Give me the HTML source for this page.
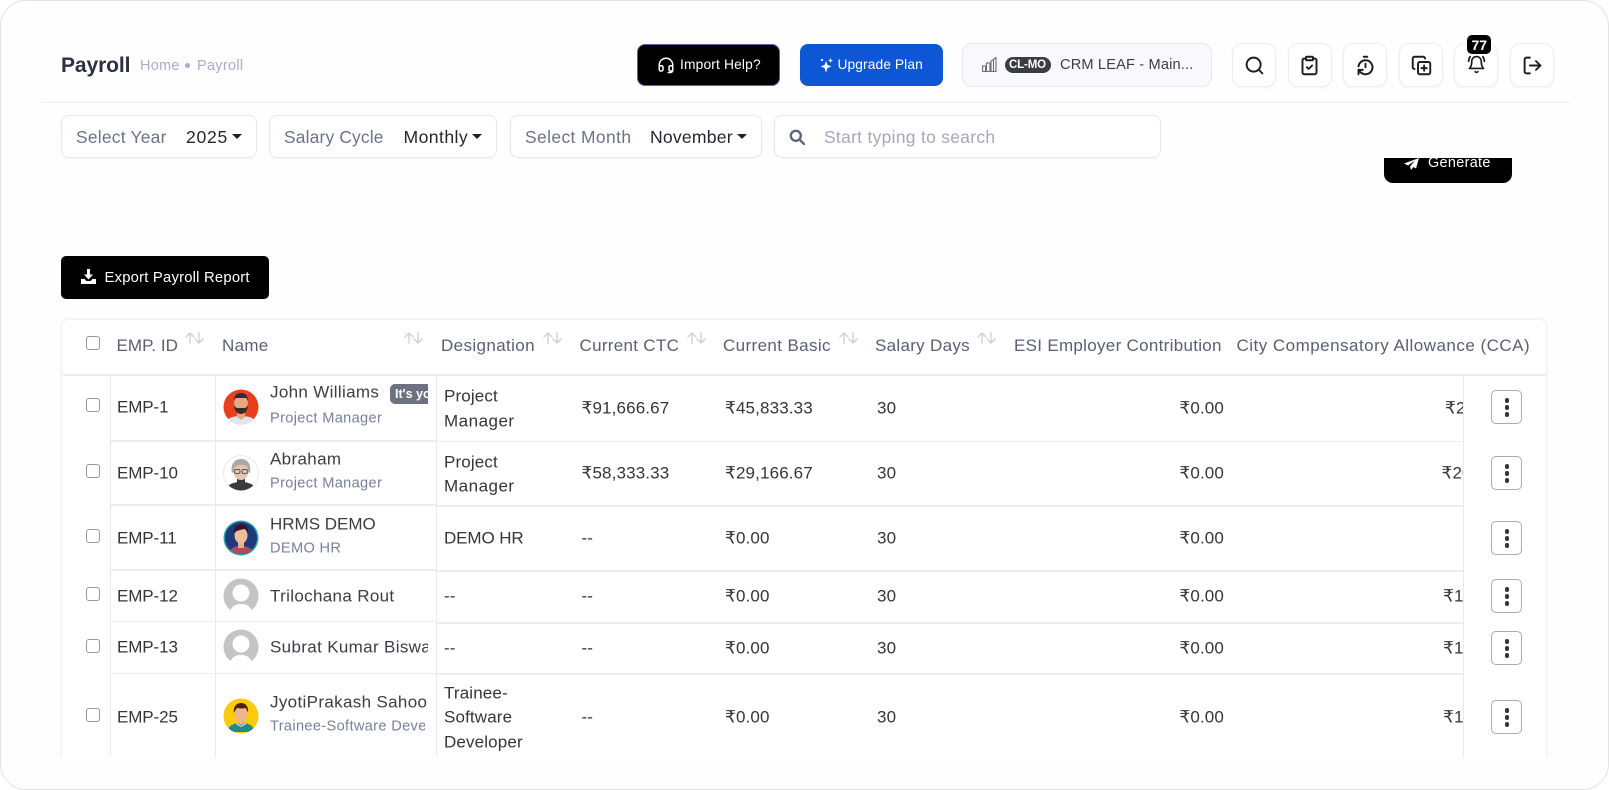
<!DOCTYPE html>
<html><head><meta charset="utf-8"><title>Payroll</title>
<style>
html,body{margin:0;padding:0;width:1609px;height:790px;overflow:hidden;background:#fff}
body{font-family:"Liberation Sans",sans-serif;position:relative}
#page{position:absolute;left:0;top:0;width:1609px;height:790px;box-sizing:border-box;border:1.5px solid #e3e3e3;border-radius:26px;background:#fefefe}
#root{position:absolute;left:0;top:0;width:1609px;height:790px}
.t{position:absolute;white-space:nowrap;line-height:0}
.b{position:absolute;box-sizing:border-box}
.ib{position:absolute;top:43px;width:44px;height:44px;box-sizing:border-box;border:1px solid #ecedf3;border-radius:10px;background:#fff;box-shadow:0 1px 2px rgba(40,40,80,.05)}
.ib svg{position:absolute;left:10.5px;top:10.5px;width:21px;height:21px;fill:none;stroke:#1d1d20;stroke-width:2.2;stroke-linecap:round;stroke-linejoin:round}
.f{position:absolute;top:115px;height:43px;box-sizing:border-box;border:1px solid #e6e7f0;border-radius:8px;background:#fff;box-shadow:0 1px 2px rgba(40,40,80,.04)}
.fl{font-size:17.4px;color:#6b7389;letter-spacing:.24px;top:136.5px}
.fv{font-size:17.6px;color:#25272e;top:136.5px}
.car{position:absolute;width:0;height:0;border-left:5px solid transparent;border-right:5px solid transparent;border-top:5.5px solid #222;top:134px}
.h{font-size:17px;color:#5a6072;letter-spacing:.3px;top:346px}
.c{font-size:17px;color:#33353c;letter-spacing:.14px;transform:translateY(.6px)}
.id{letter-spacing:-.1px}
.n{font-size:17px;color:#3c3e46;letter-spacing:.34px;transform:translateY(.6px)}
.s{font-size:14.6px;color:#78809b;letter-spacing:.34px;transform:translateY(.6px)}
.hl{position:absolute;height:1.5px;background:#ecedf4}
.vl{position:absolute;width:1px;background:#e8e9f1}
.cb{position:absolute;left:86px;width:14px;height:14px;box-sizing:border-box;border:1.5px solid #98989d;border-radius:3px;background:#fff}
.act{position:absolute;left:1491px;width:31px;height:34px;box-sizing:border-box;border:1px solid #a6abbd;border-radius:5px;background:#fff}
.act i{position:absolute;left:12.5px;width:4.5px;height:4.5px;border-radius:50%;background:#33353c}
.sort{position:absolute;top:332px;width:19px;height:12px;fill:none;stroke:#cfd0d8;stroke-width:1.4;stroke-linecap:round;stroke-linejoin:round}
.av{position:absolute;left:223px;width:36px;height:36px}
.clip{position:absolute;overflow:hidden}
</style></head><body>
<div id="page"></div>
<div id="root">

<!-- header -->
<div class="t" style="left:61px;top:65.5px;font-size:21px;font-weight:700;color:#2b3140;letter-spacing:-.1px">Payroll</div>
<div class="t" style="left:140px;top:65.5px;font-size:14.4px;color:#a8adc6;letter-spacing:.35px">Home</div>
<div class="b" style="left:185px;top:63px;width:5px;height:5px;border-radius:50%;background:#a8adc6"></div>
<div class="t" style="left:197px;top:65.5px;font-size:14.4px;color:#a8adc6;letter-spacing:.35px">Payroll</div>
<div class="b" style="left:41px;top:102px;width:1529px;height:1px;background:#eeeef5"></div>

<div class="b" style="left:637px;top:44px;width:143px;height:42px;background:#000;border:1px solid #5b5fb0;border-radius:8px"></div>
<svg style="position:absolute;left:657px;top:56px;width:18px;height:18px;fill:none;stroke:#fff;stroke-width:2;stroke-linecap:round;stroke-linejoin:round" viewBox="0 0 24 24"><path d="M3 14v-2a9 9 0 0 1 18 0v2"/><path d="M3 15a2 2 0 0 1 2-2h1a2 2 0 0 1 2 2v3a2 2 0 0 1-2 2H5a2 2 0 0 1-2-2z"/><path d="M21 15a2 2 0 0 0-2-2h-1a2 2 0 0 0-2 2v3a2 2 0 0 0 2 2h1a2 2 0 0 0 2-2z"/><path d="M21 18v1a3 3 0 0 1-3 3h-3"/></svg>
<div class="t" style="left:680px;top:65px;font-size:13.8px;color:#fff;letter-spacing:.15px">Import Help?</div>

<div class="b" style="left:800px;top:44px;width:143px;height:42px;background:#0d57d6;border-radius:8px"></div>
<svg style="position:absolute;left:820px;top:58px;width:13px;height:15px;fill:#fff" viewBox="0 0 13 15"><path d="M6 3l1.5 4L11.5 8.5 7.500 10 6 14.500 4.500 10 .5 8.500 4.500 7z"/><path d="M10.500 0l.7 1.800 1.800.7-1.800.7-.7 1.800-.7-1.800-1.800-.7 1.800-.7z"/><circle cx="2" cy="2" r="1.100"/></svg>
<div class="t" style="left:837.5px;top:65px;font-size:13.8px;color:#fff;letter-spacing:.08px">Upgrade Plan</div>

<div class="b" style="left:962px;top:43px;width:250px;height:44px;background:#f8f8fd;border:1px solid #e5e6f1;border-radius:10px"></div>
<svg style="position:absolute;left:982px;top:57px;width:15px;height:15px;fill:none;stroke:#6d7078;stroke-width:1.100" viewBox="0 0 15 15"><rect x=".6" y="9" width="3" height="5.500"/><rect x="4.500" y="6" width="3.500" height="8.500"/><path d="M9 14.500V4l5-3.500v14z"/><path d="M11.500 3v11"/></svg>
<div class="b" style="left:1005px;top:57px;width:46px;height:16px;background:#3a3d42;border-radius:8px"></div>
<div class="t" style="left:1009px;top:65px;font-size:11.5px;font-weight:700;color:#fff;letter-spacing:-.15px">CL-MO</div>
<div class="t" style="left:1060px;top:65px;font-size:14.6px;color:#3c3e46;letter-spacing:.16px">CRM LEAF - Main...</div>

<div class="ib" style="left:1232px"><svg viewBox="0 0 24 24"><circle cx="11" cy="11" r="8"/><path d="M21 21l-4.300-4.300"/></svg></div>
<div class="ib" style="left:1288px"><svg style="left:10px" viewBox="0 0 24 24"><rect x="8" y="2" width="8" height="4" rx="1"/><path d="M16 4h2a2 2 0 0 1 2 2v14a2 2 0 0 1-2 2H6a2 2 0 0 1-2-2V6a2 2 0 0 1 2-2h2"/><path d="M9 14l2 2 4-4"/></svg></div>
<div class="ib" style="left:1343px"><svg viewBox="0 0 24 24"><path d="M10 2h4"/><path d="M12 14v-4"/><path d="M4 13a8 8 0 0 1 8-7 8 8 0 1 1-5.300 14L4 17.600"/><path d="M9 17H4v5"/></svg></div>
<div class="ib" style="left:1399px"><svg viewBox="0 0 24 24"><path d="M15 12v6M12 15h6"/><rect x="8" y="8" width="14" height="14" rx="2"/><path d="M4 16c-1.100 0-2-.9-2-2V4c0-1.100.9-2 2-2h10c1.100 0 2 .9 2 2"/></svg></div>
<div class="ib" style="left:1454px"><svg style="left:12px;top:11px;width:19px;height:19px;stroke-width:2.1" viewBox="0 0 24 24"><path d="M6 8a6 6 0 0 1 12 0c0 7 3 9 3 9H3s3-2 3-9"/><path d="M10.300 21a1.940 1.940 0 0 0 3.400 0"/><path d="M4 2C2.800 3.700 2 5.700 2 8"/><path d="M22 8c0-2.300-.8-4.300-2-6"/></svg></div>
<div class="b" style="left:1467px;top:35px;width:24px;height:19px;background:#000;border-radius:5px"></div>
<div class="t" style="left:1471.5px;top:44.5px;font-size:14px;font-weight:700;color:#fff">77</div>
<div class="ib" style="left:1510px"><svg viewBox="0 0 24 24"><path d="M9 21H5a2 2 0 0 1-2-2V5a2 2 0 0 1 2-2h4"/><path d="M16 17l5-5-5-5"/><path d="M21 12H9"/></svg></div>

<!-- generate (behind) -->
<div class="b" style="left:1384px;top:158px;width:128px;height:25px;background:#000;border-radius:0 0 9px 9px"></div>
<svg style="position:absolute;left:1404px;top:157px;width:15px;height:13px;fill:#fff" viewBox="0 0 15 13"><path d="M15 1L0 6.500l4 2 7-5-5 6 1 3.500 2.500-3 2.500 1.500z"/></svg>
<div class="t" style="left:1428px;top:163px;font-size:14.4px;color:#fff;letter-spacing:.34px">Generate</div>

<!-- filters -->
<div class="f" style="left:61px;width:196px"></div>
<div class="t fl" style="left:76px">Select Year</div>
<div class="t fv" style="left:186px;letter-spacing:.7px">2025</div>
<div class="car" style="left:231.5px"></div>
<div class="f" style="left:269px;width:228px"></div>
<div class="t fl" style="left:284px;letter-spacing:.17px">Salary Cycle</div>
<div class="t fv" style="left:403.5px;letter-spacing:.43px">Monthly</div>
<div class="car" style="left:472px"></div>
<div class="f" style="left:510px;width:252px"></div>
<div class="t fl" style="left:525px;letter-spacing:.41px">Select Month</div>
<div class="t fv" style="left:650px;letter-spacing:.2px">November</div>
<div class="car" style="left:737px"></div>
<div class="f" style="left:774px;width:387px"></div>
<svg style="position:absolute;left:789px;top:129px;width:16px;height:16px;fill:none;stroke:#5f6678;stroke-width:2.4;stroke-linecap:round" viewBox="0 0 16 16"><circle cx="6.800" cy="6.800" r="5"/><path d="M10.700 10.700L15 15"/></svg>
<div class="t" style="left:824px;top:136.5px;font-size:17.4px;color:#a5a8b8;letter-spacing:.32px">Start typing to search</div>

<!-- export -->
<div class="b" style="left:61px;top:256px;width:208px;height:43px;background:#000;border-radius:5px"></div>
<svg style="position:absolute;left:81px;top:269px;width:15px;height:15px;fill:#fff" viewBox="0 0 15 15"><path d="M6 0h3v5.500h3L7.500 10.500 3 5.500h3z"/><path d="M0 10h3.500l2 2h4l2-2H15v5H0z"/></svg>
<div class="t" style="left:104.5px;top:278px;font-size:14.8px;color:#fff;letter-spacing:.22px">Export Payroll Report</div>

<!-- table -->
<div class="clip" style="left:50px;top:305px;width:1510px;height:452px">
 <div class="b" style="left:11px;top:14px;width:1486px;height:500px;background:#fff;border:1.5px solid #f0f1f8;border-radius:8px 8px 0 0;box-shadow:0 0 5px rgba(60,60,120,.05)"></div>
</div>

<div class="clip" style="left:0;top:0;width:1609px;height:757px">
 <div class="hl" style="left:63px;width:1483px;top:373.5px;height:2px"></div>
 <div class="hl" style="left:110px;width:326px;top:440px"></div>
 <div class="hl" style="left:110px;width:326px;top:504px"></div>
 <div class="hl" style="left:110px;width:326px;top:569px"></div>
 <div class="hl" style="left:110px;width:326px;top:620.5px"></div>
 <div class="hl" style="left:110px;width:326px;top:672.5px"></div>
 <div class="hl" style="left:436px;width:1027px;top:440.5px"></div>
 <div class="hl" style="left:436px;width:1027px;top:505px"></div>
 <div class="hl" style="left:436px;width:1027px;top:570px"></div>
 <div class="hl" style="left:436px;width:1027px;top:622px"></div>
 <div class="hl" style="left:436px;width:1027px;top:673px"></div>
 <div class="vl" style="left:109.5px;top:375px;height:390px"></div>
 <div class="vl" style="left:215px;top:375px;height:390px"></div>
 <div class="vl" style="left:435.5px;top:375px;height:390px;width:1.5px"></div>
 <div class="vl" style="left:1463px;top:375px;height:390px"></div>

 <!-- header row -->
 <div class="cb" style="top:336px"></div>
 <div class="t h" style="left:116.5px;letter-spacing:.05px">EMP. ID</div>
 <div class="t h" style="left:222px">Name</div>
 <div class="t h" style="left:441px;letter-spacing:.38px">Designation</div>
 <div class="t h" style="left:579.5px">Current CTC</div>
 <div class="t h" style="left:723px;letter-spacing:.38px">Current Basic</div>
 <div class="t h" style="left:875px">Salary Days</div>
 <div class="t h" style="left:1014px">ESI Employer Contribution</div>
 <div class="t h" style="left:1236.5px;letter-spacing:.48px">City Compensatory Allowance (CCA)</div>
 <svg class="sort" style="left:185px" viewBox="0 0 19 12"><path d="M5 11.500V1M1 5l4-4 4 4M14 .5V11M10 7l4 4 4-4"/></svg>
 <svg class="sort" style="left:404px" viewBox="0 0 19 12"><path d="M5 11.500V1M1 5l4-4 4 4M14 .5V11M10 7l4 4 4-4"/></svg>
 <svg class="sort" style="left:543px" viewBox="0 0 19 12"><path d="M5 11.500V1M1 5l4-4 4 4M14 .5V11M10 7l4 4 4-4"/></svg>
 <svg class="sort" style="left:687px" viewBox="0 0 19 12"><path d="M5 11.500V1M1 5l4-4 4 4M14 .5V11M10 7l4 4 4-4"/></svg>
 <svg class="sort" style="left:839px" viewBox="0 0 19 12"><path d="M5 11.500V1M1 5l4-4 4 4M14 .5V11M10 7l4 4 4-4"/></svg>
 <svg class="sort" style="left:977px" viewBox="0 0 19 12"><path d="M5 11.500V1M1 5l4-4 4 4M14 .5V11M10 7l4 4 4-4"/></svg>

 <!-- checkboxes -->
 <div class="cb" style="top:398px"></div>
 <div class="cb" style="top:464px"></div>
 <div class="cb" style="top:529px"></div>
 <div class="cb" style="top:587px"></div>
 <div class="cb" style="top:639px"></div>
 <div class="cb" style="top:708px"></div>

 <!-- ids -->
 <div class="t c id" style="left:117px;top:407px">EMP-1</div>
 <div class="t c id" style="left:117px;top:473px">EMP-10</div>
 <div class="t c id" style="left:117px;top:537.5px">EMP-11</div>
 <div class="t c id" style="left:117px;top:596px">EMP-12</div>
 <div class="t c id" style="left:117px;top:647px">EMP-13</div>
 <div class="t c id" style="left:117px;top:716.5px">EMP-25</div>

 <!-- avatars -->
 <svg class="av" style="top:389px" viewBox="0 0 36 36"><defs><clipPath id="a1"><circle cx="18" cy="18" r="17.500"/></clipPath></defs><g clip-path="url(#a1)"><rect width="36" height="36" fill="#e8401e"/><path d="M2 36c1-7 8-9 16-9s15 2 16 9z" fill="#dfe7ee"/><path d="M14 22h8v6l-4 3-4-3z" fill="#e8a77f"/><ellipse cx="18" cy="15" rx="7" ry="9" fill="#e8a77f"/><path d="M11 12c0-6 3-8 7-8s7 2 7 8l-1.500-3h-11z" fill="#25303f"/><path d="M11 15c1 4 2 3 3 4h8c1-1 2 0 3-4 0 7-3 10-7 10s-7-3-7-10z" fill="#3c2c28"/></g></svg>
 <svg class="av" style="top:454.5px" viewBox="0 0 36 36"><defs><clipPath id="a2"><circle cx="18" cy="18" r="17.500"/></clipPath></defs><circle cx="18" cy="18" r="17.500" fill="#fff" stroke="#e8e9f1"/><g clip-path="url(#a2)"><path d="M2 36c1-6 8-9 16-9s15 3 16 9z" fill="#3a3a3c"/><rect x="14" y="21" width="8" height="8" fill="#3a3a3c"/><ellipse cx="18" cy="16" rx="7.500" ry="9" fill="#e6c4b0"/><path d="M9 18c-2-9 3-14 9-14s11 5 9 14l-2-1c1-5-2-7-7-7s-8 2-7 7z" fill="#a9a9ab"/><rect x="11.500" y="14.500" width="5.500" height="4" rx="1.500" fill="none" stroke="#555" stroke-width=".9"/><rect x="19" y="14.500" width="5.500" height="4" rx="1.500" fill="none" stroke="#555" stroke-width=".9"/></g></svg>
 <svg class="av" style="top:519.5px" viewBox="0 0 36 36"><defs><clipPath id="a3"><circle cx="18" cy="18" r="16"/></clipPath></defs><circle cx="18" cy="18" r="17.500" fill="#2a9fb0"/><circle cx="18" cy="18" r="16" fill="#1f3a78"/><g clip-path="url(#a3)"><path d="M5 36c0-7 6-10 13-10s13 3 13 10z" fill="#b24a5c"/><rect x="15" y="21" width="6" height="7" fill="#e9b08f"/><ellipse cx="18" cy="15.500" rx="6.500" ry="8" fill="#f0bd9c"/><path d="M11 14c-1-7 3-10 8-10s7 4 6 10c-1-3-2-5-4-5-3 1-8 1-10 5z" fill="#3a1230"/></g></svg>
 <svg class="av" style="top:578px" viewBox="0 0 36 36"><defs><clipPath id="a4"><circle cx="18" cy="18" r="17.500"/></clipPath></defs><circle cx="18" cy="18" r="17.500" fill="#c4c4c7"/><g clip-path="url(#a4)"><circle cx="18" cy="15" r="8.500" fill="#fff"/><path d="M7 36c0-7 5-10 11-10s11 3 11 10z" fill="#fff"/></g></svg>
 <svg class="av" style="top:629px" viewBox="0 0 36 36"><defs><clipPath id="a5"><circle cx="18" cy="18" r="17.500"/></clipPath></defs><circle cx="18" cy="18" r="17.500" fill="#c4c4c7"/><g clip-path="url(#a5)"><circle cx="18" cy="15" r="8.500" fill="#fff"/><path d="M7 36c0-7 5-10 11-10s11 3 11 10z" fill="#fff"/></g></svg>
 <svg class="av" style="top:698px" viewBox="0 0 36 36"><defs><clipPath id="a6"><circle cx="18" cy="18" r="17.500"/></clipPath></defs><circle cx="18" cy="18" r="17.500" fill="#fbca0a"/><g clip-path="url(#a6)"><path d="M5 34c0-7 6-9 13-9s13 2 13 9z" fill="#1f8c8a"/><path d="M14 24l4 3 4-3-1-4h-6z" fill="#f0b48e"/><path d="M14 25l4 3 4-3 1 1-5 3-5-3z" fill="#e8f4f4"/><ellipse cx="18" cy="15" rx="6.500" ry="8" fill="#f0b48e"/><path d="M11 15c-1-7 3-10 7-10s8 3 7 10c-1-3-2-5-3-5-3 1-7 0-8 0-1 1-2 3-3 5z" fill="#4a2512"/></g></svg>

 <!-- names -->
 <div class="t n" style="left:270px;top:392px">John Williams</div>
 <div class="clip" style="left:390px;top:384px;width:38px;height:20px;background:#6c7280;border-radius:5px 0 0 5px"><div class="t" style="left:5px;top:10px;font-size:12.5px;font-weight:700;color:#fff">It's you</div></div>
 <div class="t s" style="left:270px;top:418px">Project Manager</div>
 <div class="t n" style="left:270px;top:458.5px">Abraham</div>
 <div class="t s" style="left:270px;top:482.5px">Project Manager</div>
 <div class="t n" style="left:270px;top:523.5px;letter-spacing:0">HRMS DEMO</div>
 <div class="t s" style="left:270px;top:547.5px">DEMO HR</div>
 <div class="t n" style="left:270px;top:596px">Trilochana Rout</div>
 <div class="clip" style="left:270px;top:632px;width:158px;height:30px"><div class="t n" style="left:0;top:15px">Subrat Kumar Biswal</div></div>
 <div class="clip" style="left:270px;top:690px;width:158px;height:24px"><div class="t n" style="left:0;top:12px">JyotiPrakash Sahoo</div></div>
 <div class="clip" style="left:270px;top:716px;width:155px;height:20px"><div class="t s" style="left:0;top:10px">Trainee-Software Developer</div></div>

 <!-- designation -->
 <div class="t c" style="left:444px;top:396px">Project</div>
 <div class="t c" style="left:444px;top:420.5px;letter-spacing:.5px">Manager</div>
 <div class="t c" style="left:444px;top:461.5px">Project</div>
 <div class="t c" style="left:444px;top:486px;letter-spacing:.5px">Manager</div>
 <div class="t c" style="left:444px;top:537.5px;letter-spacing:-.1px">DEMO HR</div>
 <div class="t c" style="left:444px;top:596px">--</div>
 <div class="t c" style="left:444px;top:647.5px">--</div>
 <div class="t c" style="left:444px;top:692.5px">Trainee-</div>
 <div class="t c" style="left:444px;top:717px">Software</div>
 <div class="t c" style="left:444px;top:742px">Developer</div>

 <!-- ctc -->
 <div class="t c" style="left:581.5px;top:407.5px">₹91,666.67</div>
 <div class="t c" style="left:581.5px;top:473px">₹58,333.33</div>
 <div class="t c" style="left:581.5px;top:538px">--</div>
 <div class="t c" style="left:581.5px;top:596px">--</div>
 <div class="t c" style="left:581.5px;top:647.5px">--</div>
 <div class="t c" style="left:581.5px;top:717px">--</div>

 <!-- basic -->
 <div class="t c" style="left:725px;top:407.5px">₹45,833.33</div>
 <div class="t c" style="left:725px;top:473px">₹29,166.67</div>
 <div class="t c" style="left:725px;top:538px">₹0.00</div>
 <div class="t c" style="left:725px;top:596px">₹0.00</div>
 <div class="t c" style="left:725px;top:647.5px">₹0.00</div>
 <div class="t c" style="left:725px;top:717px">₹0.00</div>

 <!-- days -->
 <div class="t c" style="left:877px;top:407.5px">30</div>
 <div class="t c" style="left:877px;top:473px">30</div>
 <div class="t c" style="left:877px;top:538px">30</div>
 <div class="t c" style="left:877px;top:596px">30</div>
 <div class="t c" style="left:877px;top:647.5px">30</div>
 <div class="t c" style="left:877px;top:717px">30</div>

 <!-- esi -->
 <div class="t c" style="right:385px;top:407.5px">₹0.00</div>
 <div class="t c" style="right:385px;top:473px">₹0.00</div>
 <div class="t c" style="right:385px;top:538px">₹0.00</div>
 <div class="t c" style="right:385px;top:596px">₹0.00</div>
 <div class="t c" style="right:385px;top:647.5px">₹0.00</div>
 <div class="t c" style="right:385px;top:717px">₹0.00</div>

 <!-- cca clipped -->
 <div class="clip" style="left:1430px;top:375px;width:33px;height:390px">
  <div class="t c" style="left:15px;top:32.5px">₹22,916.67</div>
  <div class="t c" style="left:11.5px;top:98px">₹20,416.67</div>
  <div class="t c" style="left:13px;top:221px">₹19,500.00</div>
  <div class="t c" style="left:13px;top:272.5px">₹19,500.00</div>
  <div class="t c" style="left:13px;top:342px">₹19,500.00</div>
 </div>

 <!-- actions -->
 <div class="act" style="top:390px"><i style="top:7px"></i><i style="top:14px"></i><i style="top:21px"></i></div>
 <div class="act" style="top:456px"><i style="top:7px"></i><i style="top:14px"></i><i style="top:21px"></i></div>
 <div class="act" style="top:521px"><i style="top:7px"></i><i style="top:14px"></i><i style="top:21px"></i></div>
 <div class="act" style="top:579px"><i style="top:7px"></i><i style="top:14px"></i><i style="top:21px"></i></div>
 <div class="act" style="top:631px"><i style="top:7px"></i><i style="top:14px"></i><i style="top:21px"></i></div>
 <div class="act" style="top:700px"><i style="top:7px"></i><i style="top:14px"></i><i style="top:21px"></i></div>
</div>
</div>
</body></html>
